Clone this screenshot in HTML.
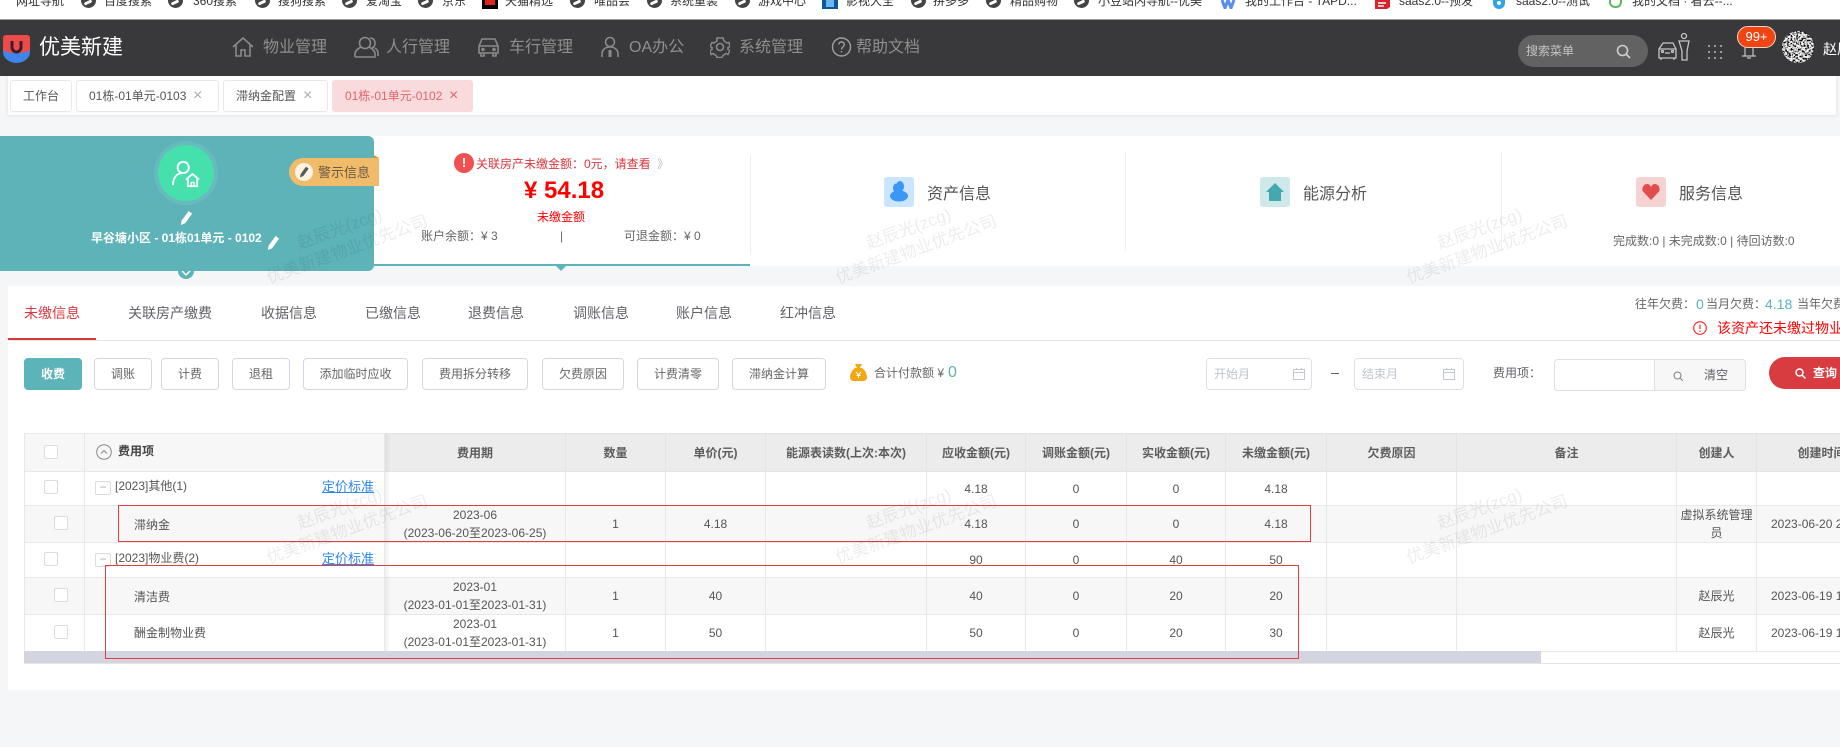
<!DOCTYPE html>
<html lang="zh">
<head>
<meta charset="utf-8">
<title>优美新建</title>
<style>
*{box-sizing:border-box;margin:0;padding:0}
html,body{width:1840px;height:747px;overflow:hidden;background:#f5f6f8}
body{position:relative;font-family:"Liberation Sans","Noto Sans CJK SC",sans-serif;font-size:12px;color:#606266}
.a{position:absolute}
.t{position:absolute;white-space:nowrap;line-height:1}
.b{position:absolute;top:358px;height:32px;border:1px solid #d6d6e0;border-radius:4px;background:#fff;color:#666;text-align:center;line-height:30px;font-size:12px}
.tab{position:absolute;top:80px;height:32px;border:1px solid #e8e8e8;border-radius:3px;background:#fff;line-height:30px;padding-left:12px;color:#555;white-space:nowrap}
.x{position:absolute;top:0;color:#aaa;font-size:16px;font-weight:normal}
.nav{position:absolute;top:40px;font-size:16px;line-height:16px;color:#8f8f8f;white-space:nowrap}
.ni{position:absolute;top:36px;fill:none;stroke:#8a8a8a;stroke-width:1.6}
.bk{position:absolute;top:-5px;line-height:12px;color:#333;white-space:nowrap}
.g{position:absolute;top:-7px;width:15px;height:15px;border-radius:50%;background:#444}
.g:after{content:"";position:absolute;left:3px;top:8px;width:8px;height:3px;background:#fff;border-radius:2px;transform:rotate(-25deg)}
.tabx{position:absolute;top:306px;font-size:14px;line-height:14px;color:#606266;white-space:nowrap}
table{border-collapse:collapse;table-layout:fixed;width:1860px}
td,th{border:1px solid #e8e8e8;text-align:center;font-size:12px;line-height:18px;color:#555;font-weight:normal;overflow:hidden}
th{background:#ececec;font-weight:bold;color:#5c5c5c;border-color:#e4e4e4}
th.s{background:#f7f7f7;border-color:#e8e8e8}
tr.z td{background:#f7f7f7}
.cb{position:absolute;width:14px;height:14px;border:1px solid #dcdcdc;border-radius:2px;background:#fff}
.ex{position:absolute;left:95px;width:16px;height:14px;border:1px solid #dcdcdc;border-radius:2px;background:#fff;color:#aaa;text-align:center;line-height:11px;font-size:12px}
.lk{position:absolute;left:322px;font-size:13px;line-height:13px;color:#2f88ea;text-decoration:underline;white-space:nowrap}
.rd{position:absolute;border:1px solid #e43d3d;pointer-events:none}
</style>
</head>
<body>

<!-- bookmarks -->
<div class="a" style="left:0;top:0;width:1840px;height:20px;background:#fff;border-bottom:1px solid #9a9a9a;overflow:hidden">
<span class="bk" style="left:16px">网址导航</span>
<span class="g" style="left:81px"></span><span class="bk" style="left:104px">百度搜索</span>
<span class="g" style="left:168px"></span><span class="bk" style="left:193px">360搜索</span>
<span class="g" style="left:255px"></span><span class="bk" style="left:278px">搜狗搜索</span>
<span class="g" style="left:342px"></span><span class="bk" style="left:366px">爱淘宝</span>
<span class="g" style="left:418px"></span><span class="bk" style="left:442px">京东</span>
<span class="a" style="left:482px;top:0;width:16px;height:9px;background:#000"></span><span class="a" style="left:485px;top:0;width:10px;height:5px;background:#e2231a"></span><span class="bk" style="left:505px">天猫精选</span>
<span class="g" style="left:570px"></span><span class="bk" style="left:594px">唯品会</span>
<span class="g" style="left:647px"></span><span class="bk" style="left:670px">系统重装</span>
<span class="g" style="left:735px"></span><span class="bk" style="left:758px">游戏中心</span>
<span class="a" style="left:822px;top:0;width:16px;height:9px;background:#0b5a96"></span><span class="a" style="left:826px;top:0;width:8px;height:7px;background:#6db6ee"></span><span class="bk" style="left:846px">影视大全</span>
<span class="g" style="left:911px"></span><span class="bk" style="left:933px">拼多多</span>
<span class="g" style="left:986px"></span><span class="bk" style="left:1010px">精品购物</span>
<span class="g" style="left:1074px"></span><span class="bk" style="left:1098px">小豆站内导航--优美</span>
<svg class="a" style="left:1221px;top:0" width="15" height="9" fill="none" stroke="#5b8def" stroke-width="3"><path d="M1 0l3 8 3-8 3 8 3-8"/></svg><span class="bk" style="left:1245px">我的工作台 - TAPD...</span>
<svg class="a" style="left:1375px;top:0" width="15" height="9"><path d="M0 0h15v7l-3 2H0z" fill="#d8232a"/><path d="M3 3h8M3 6h6" stroke="#fff" stroke-width="1.500"/></svg><span class="bk" style="left:1399px">saas2.0--预发</span>
<span class="a" style="left:1493px;top:0;width:12px;height:9px;background:#2fa4e7;border-radius:0 0 6px 6px"></span><span class="a" style="left:1497px;top:1px;width:4px;height:4px;background:#fff;border-radius:50%"></span><span class="bk" style="left:1516px">saas2.0--测试</span>
<span class="a" style="left:1609px;top:0;width:13px;height:8px;border:2px solid #5cb85c;border-top:none;border-radius:0 0 6px 6px"></span><span class="bk" style="left:1632px">我的文档 · 看云--...</span>
</div>

<!-- header -->
<div class="a" style="left:0;top:20px;width:1840px;height:56px;background:#39393b"></div>
<svg class="a" style="left:2px;top:34px" width="29" height="30" viewBox="0 0 29 30">
<path d="M1 14h27v4a13.500 11 0 0 1-27 0z" fill="#3f86ea"/>
<path d="M4 1h21a3 3 0 0 1 3 3v12c-4 2-6 3-13.500 3S5 18 1 16V4a3 3 0 0 1 3-3z" fill="#ef4a4a"/>
<path d="M10 7v6a4.500 5 0 0 0 9 0V7" fill="none" stroke="#3a2028" stroke-width="3"/>
</svg>
<span class="t" style="left:39px;top:37px;font-size:21px;line-height:21px;color:#fff">优美新建</span>

<svg class="ni" style="left:232px" width="22" height="22" viewBox="0 0 22 22"><path d="M1 11 11 2l10 9M4 9v11h5v-6h4v6h5V9"/></svg>
<span class="nav" style="left:263px">物业管理</span>
<svg class="ni" style="left:353px" width="26" height="22" viewBox="0 0 26 22"><circle cx="12" cy="7" r="5.500"/><path d="M2 21v-3c0-4 4-6 6-7m8 0c2 1 6 3 6 7v3H2M17 2c3 0 5 2 5 5s-1 4-3 5m3 0c1 1 3 2 3 5v3"/></svg>
<span class="nav" style="left:386px">人行管理</span>
<svg class="ni" style="left:477px" width="23" height="22" viewBox="0 0 23 22"><path d="M5 3h13l3 7v7H2v-7zM2 10h19M4 17v3h3v-3m9 0v3h3v-3"/><circle cx="6" cy="13.500" r="1"/><circle cx="17" cy="13.500" r="1"/></svg>
<span class="nav" style="left:509px">车行管理</span>
<svg class="ni" style="left:600px" width="20" height="22" viewBox="0 0 20 22"><circle cx="10" cy="6" r="4.500"/><path d="M2 21v-3c0-4 3-7 8-7s8 3 8 7v3"/><path d="M10 14v7" stroke-width="3"/></svg>
<span class="nav" style="left:629px">OA办公</span>
<svg class="ni" style="left:710px" width="20" height="22" viewBox="0 0 20 22"><path d="M7 2h6l1 3 3 2 2-.500 1 4-2 1v2l2 1-2 4-2-1-3 2-1 2H7l-1-2-3-2-2 1-1-4 2-1v-2l-2-1 2-4 2 .500 3-2z" stroke-width="1.500"/><circle cx="10" cy="11" r="3.500"/></svg>
<span class="nav" style="left:739px">系统管理</span>
<svg class="a" style="left:831px;top:37px" width="21" height="21" viewBox="0 0 21 21" fill="none" stroke="#a0a0a0" stroke-width="1.400"><circle cx="10.500" cy="10" r="9"/><path d="M7.800 7.500c0-3.500 5.500-3.500 5.500 0 0 2.500-2.800 2.300-2.800 5"/><path d="M10.500 14v1.500"/></svg>
<span class="nav" style="left:856px">帮助文档</span>

<div class="a" style="left:1518px;top:35px;width:130px;height:32px;border-radius:16px;background:#626263"></div>
<span class="t" style="left:1526px;top:45px;color:#c4c4c4">搜索菜单</span>
<svg class="a" style="left:1616px;top:44px" width="15" height="15" viewBox="0 0 15 15" fill="none" stroke="#cfcfcf" stroke-width="1.600"><circle cx="6.500" cy="6.500" r="5"/><path d="M10 10l4 4"/></svg>
<svg class="a" style="left:1658px;top:32px" width="32" height="29" viewBox="0 0 32 29" fill="none" stroke="#c4c4c8" stroke-width="1.300"><path d="M5 11h10l3 6v9H1v-9zM1 17h17M3 26v2m13-2v2"/><path d="M7 21h5"/><circle cx="4.500" cy="19.500" r="1"/><circle cx="14.500" cy="19.500" r="1"/><circle cx="26" cy="4" r="2.500"/><path d="M21 9h10l-2 10v9h-5v-9z"/></svg>
<svg class="a" style="left:1707px;top:44px" width="16" height="16" fill="#9c9c9c"><rect x="1" y="1" width="2" height="2"/><rect x="7" y="1" width="2" height="2"/><rect x="13" y="1" width="2" height="2"/><rect x="1" y="7" width="2" height="2"/><rect x="7" y="7" width="2" height="2"/><rect x="13" y="7" width="2" height="2"/><rect x="1" y="13" width="2" height="2"/><rect x="7" y="13" width="2" height="2"/><rect x="13" y="13" width="2" height="2"/></svg>
<svg class="a" style="left:1741px;top:44px" width="16" height="16" fill="none" stroke="#c4c4c8" stroke-width="1.200"><path d="M4 3v9H1h14h-3V3"/><path d="M6 14h4"/></svg>
<div class="a" style="left:1737px;top:26px;width:39px;height:22px;border-radius:11px;background:#f04512;border:1px solid #f7d6c9;color:#fff;font-size:13px;line-height:20px;text-align:center">99+</div>
<svg class="a" style="left:1782px;top:31px" width="32" height="32" viewBox="0 0 32 32">
<defs><filter id="nz" x="0" y="0" width="100%" height="100%"><feTurbulence type="fractalNoise" baseFrequency="0.55" numOctaves="2" seed="4"/><feColorMatrix type="matrix" values="0 0 0 0 0  2.500 2.500 2.500 0 -3.250  0 0 0 0 0  0 0 0 0 1"/><feColorMatrix type="matrix" values="0 1 0 0 0  0 1 0 0 0  0 1 0 0 0  0 0 0 0 1"/></filter><clipPath id="cp"><circle cx="16" cy="16" r="16"/></clipPath></defs>
<rect width="32" height="32" filter="url(#nz)" clip-path="url(#cp)"/>
</svg>
<span class="t" style="left:1823px;top:42px;font-size:14px;line-height:14px;color:#fff">赵辰光</span>

<!-- tabs row -->
<div class="a" style="left:7px;top:76px;width:1830px;height:39px;background:#fff;box-shadow:0 1px 3px rgba(0,0,0,.08);border-left:1px solid #eee;border-right:1px solid #eee"></div>
<div class="tab" style="left:10px;width:62px">工作台</div>
<div class="tab" style="left:76px;width:143px">01栋-01单元-0103<span class="x" style="left:116px;line-height:30px">×</span></div>
<div class="tab" style="left:223px;width:105px">滞纳金配置<span class="x" style="left:79px;line-height:30px">×</span></div>
<div class="tab" style="left:332px;width:141px;background:#f9dadd;border-color:#f9dadd;color:#e0666f">01栋-01单元-0102<span class="x" style="left:116px;line-height:30px;color:#e0666f">×</span></div>

<!-- info panel -->
<div class="a" style="left:0;top:136px;width:1840px;height:130px;background:#fff"></div>
<div class="a" style="left:374px;top:264px;width:376px;height:2px;background:#5cb3b8"></div>
<div class="a" style="left:554px;top:264px;width:0;height:0;border-left:7px solid transparent;border-right:7px solid transparent;border-top:7px solid #5cb3b8"></div>
<div class="a" style="left:750px;top:155px;width:1px;height:100px;background:#eceef0"></div>
<div class="a" style="left:1125px;top:151px;width:1px;height:100px;background:#eff0f2"></div>
<div class="a" style="left:1501px;top:151px;width:1px;height:100px;background:#eff0f2"></div>

<div class="a" style="left:178px;top:262px;width:16px;height:17px;border-radius:0 0 8px 8px;background:#5cb3b8"></div>
<svg class="a" style="left:181px;top:270px" width="10" height="7" fill="none" stroke="#fff" stroke-width="1.500"><path d="M1 1l4 4 4-4"/></svg>
<div class="a" style="left:0;top:136px;width:374px;height:135px;background:#5db3b8;border-radius:0 6px 6px 0"></div>
<div class="a" style="left:154px;top:141px;width:64px;height:64px;border-radius:50%;background:#68bbbc"></div>
<div class="a" style="left:158px;top:145px;width:56px;height:56px;border-radius:50%;background:#46e0ac"></div>
<svg class="a" style="left:172px;top:160px" width="28" height="28" viewBox="0 0 30 30" fill="none" stroke="#fff" stroke-width="2"><circle cx="12" cy="8" r="6"/><path d="M1 27c0-8 4-12 9-13"/><path d="M15 21l7-6 7 6M17 19.500V28h10v-8.500"/><path d="M20.500 28v-4h3v4" stroke-width="1.500"/></svg>
<svg class="a" style="left:179px;top:210px" width="14" height="16" viewBox="0 0 16 18" fill="#fff"><path d="M11 1l4 3-8 11-5 2 1-5z"/></svg>
<span class="t" style="left:91px;top:232px;color:#fff;font-weight:bold">早谷塘小区 - 01栋01单元 - 0102</span>
<svg class="a" style="left:266px;top:235px" width="14" height="16" viewBox="0 0 16 18" fill="#fff"><path d="M11 1l4 3-8 11-5 2 1-5z"/></svg>
<div class="a" style="left:374px;top:155px;width:0;height:0;border-bottom:3px solid #d9952f;border-right:5px solid transparent"></div>
<div class="a" style="left:289px;top:158px;width:90px;height:28px;background:#f1bc6a;border-radius:14px 0 0 14px"></div>
<div class="a" style="left:295px;top:163px;width:18px;height:18px;border-radius:50%;background:#fdf3e2"></div>
<svg class="a" style="left:298px;top:166px" width="12" height="12" viewBox="0 0 16 18" fill="#5a5a5a"><path d="M11 1l4 3-8 11-5 2 1-5z"/></svg>
<span class="t" style="left:318px;top:166px;font-size:13px;line-height:13px;color:#6a5a44">警示信息</span>

<div class="a" style="left:454px;top:153px;width:20px;height:20px;border-radius:50%;background:#f05050;color:#fff;text-align:center;line-height:20px;font-size:13px;font-weight:bold">!</div>
<span class="t" style="left:476px;top:158px;color:#d9363e">关联房产未缴金额：0元，请查看<span style="color:#bbb;margin-left:3px"> 》</span></span>
<span class="t" style="left:524px;top:179px;font-size:24px;line-height:24px;font-weight:bold;color:#f00">¥ 54.18</span>
<span class="t" style="left:537px;top:211px;color:#f00">未缴金额</span>
<span class="t" style="left:421px;top:230px;color:#666">账户余额：¥ 3</span>
<span class="t" style="left:560px;top:230px;color:#666">|</span>
<span class="t" style="left:624px;top:230px;color:#666">可退金额：¥ 0</span>

<div class="a" style="left:884px;top:177px;width:30px;height:30px;border-radius:3px;background:#cce5ff"></div>
<svg class="a" style="left:889px;top:181px" width="20" height="21" fill="#3b97f6"><ellipse cx="11" cy="5.500" rx="4" ry="5.500"/><ellipse cx="7" cy="7" rx="3" ry="4.500"/><ellipse cx="10" cy="15" rx="9" ry="5.500"/></svg>
<span class="t" style="left:927px;top:187px;font-size:16px;line-height:16px;color:#555">资产信息</span>
<div class="a" style="left:1260px;top:177px;width:30px;height:30px;border-radius:3px;background:#cfe9ea"></div>
<svg class="a" style="left:1266px;top:183px" width="18" height="18" fill="#44a8b0"><path d="M9 0l9 9h-3v9H3V9H0z"/></svg>
<span class="t" style="left:1303px;top:187px;font-size:16px;line-height:16px;color:#555">能源分析</span>
<div class="a" style="left:1636px;top:177px;width:30px;height:30px;border-radius:3px;background:#f6d3d3"></div>
<svg class="a" style="left:1642px;top:184px" width="18" height="16" fill="#e14d4d"><path d="M9 16L1 7.500C-1 4 2 0 5 0c2 0 3 1 4 3 1-2 2-3 4-3 3 0 6 4 4 7.500z"/></svg>
<span class="t" style="left:1679px;top:187px;font-size:16px;line-height:16px;color:#555">服务信息</span>
<span class="t" style="left:1613px;top:235px;color:#666">完成数:0 | 未完成数:0 | 待回访数:0</span>

<!-- main section -->
<div class="a" style="left:8px;top:286px;width:1832px;height:404px;background:#fff"></div>
<span class="tabx" style="left:24px;color:#d9383d">未缴信息</span>
<span class="tabx" style="left:128px">关联房产缴费</span>
<span class="tabx" style="left:261px">收据信息</span>
<span class="tabx" style="left:365px">已缴信息</span>
<span class="tabx" style="left:468px">退费信息</span>
<span class="tabx" style="left:573px">调账信息</span>
<span class="tabx" style="left:676px">账户信息</span>
<span class="tabx" style="left:780px">红冲信息</span>
<div class="a" style="left:8px;top:340px;width:1832px;height:1px;background:#e4e4e4"></div>
<div class="a" style="left:8px;top:338px;width:88px;height:2px;background:#d9383d"></div>

<span class="t" style="left:1635px;top:298px;color:#666">往年欠费：</span>
<span class="t" style="left:1696px;top:297px;font-size:14px;line-height:14px;color:#5cb3b8">0</span>
<span class="t" style="left:1706px;top:298px;color:#666">当月欠费：</span>
<span class="t" style="left:1765px;top:297px;font-size:14px;line-height:14px;color:#5cb3b8">4.18</span>
<span class="t" style="left:1797px;top:298px;color:#666">当年欠费</span>
<svg class="a" style="left:1693px;top:321px" width="14" height="14" fill="none" stroke="#f00"><circle cx="7" cy="7" r="6.300"/><path d="M7 3.500v4.500M7 9.500v1.500"/></svg>
<span class="t" style="left:1717px;top:321px;font-size:14px;line-height:14px;color:#f00">该资产还未缴过物业费</span>

<div class="b" style="left:24px;width:58px;background:#5cb3b8;border-color:#5cb3b8;color:#fff;font-weight:bold">收费</div>
<div class="b" style="left:94px;width:58px">调账</div>
<div class="b" style="left:161px;width:58px">计费</div>
<div class="b" style="left:232px;width:58px">退租</div>
<div class="b" style="left:303px;width:105px">添加临时应收</div>
<div class="b" style="left:422px;width:106px">费用拆分转移</div>
<div class="b" style="left:542px;width:82px">欠费原因</div>
<div class="b" style="left:637px;width:82px">计费清零</div>
<div class="b" style="left:732px;width:94px">滞纳金计算</div>
<svg class="a" style="left:850px;top:364px" width="17" height="17" fill="#f3a712"><path d="M5 0h7l-2 4h2c3 2 5 6 5 9 0 3-2 4-4 4H4c-2 0-4-1-4-4 0-3 2-7 5-9h2z"/><path d="M6 8l2.500 3L11 8M8.500 11v3M6.500 11.500h4" fill="none" stroke="#fff"/></svg>
<span class="t" style="left:874px;top:367px;color:#666">合计付款额 ¥</span>
<span class="t" style="left:948px;top:365px;font-size:16px;line-height:16px;color:#5cb3b8">0</span>

<div class="a" style="left:1206px;top:358px;width:106px;height:32px;border:1px solid #e0e0e4;border-radius:4px"></div>
<span class="t" style="left:1214px;top:368px;color:#c0c4cc">开始月</span>
<svg class="a" style="left:1292px;top:367px" width="14" height="14" fill="none" stroke="#c4c7cf"><rect x="1.500" y="2.500" width="11" height="10"/><path d="M1.500 5.500h11M4.500 1v2M9.500 1v2"/></svg>
<div class="a" style="left:1331px;top:373px;width:8px;height:1px;background:#606266"></div>
<div class="a" style="left:1354px;top:358px;width:110px;height:32px;border:1px solid #e0e0e4;border-radius:4px"></div>
<span class="t" style="left:1362px;top:368px;color:#c0c4cc">结束月</span>
<svg class="a" style="left:1442px;top:367px" width="14" height="14" fill="none" stroke="#c4c7cf"><rect x="1.500" y="2.500" width="11" height="10"/><path d="M1.500 5.500h11M4.500 1v2M9.500 1v2"/></svg>
<span class="t" style="left:1493px;top:367px;color:#606266">费用项：</span>
<div class="a" style="left:1554px;top:359px;width:192px;height:32px;border:1px solid #e0e0e4;border-radius:4px;overflow:hidden"><div class="a" style="left:99px;top:0;width:92px;height:30px;background:#f7f7f7;border-left:1px solid #e0e0e4"></div></div>
<svg class="a" style="left:1673px;top:371px" width="10" height="10" fill="none" stroke="#888" stroke-width="1.100"><circle cx="4.500" cy="4.500" r="3.500"/><path d="M7 7l3 3"/></svg>
<span class="t" style="left:1704px;top:369px;color:#606266">清空</span>
<div class="a" style="left:1769px;top:357px;width:71px;height:32px;background:#d83c40;border-radius:16px 0 0 16px"></div>
<svg class="a" style="left:1795px;top:368px" width="11" height="11" fill="none" stroke="#fff" stroke-width="1.500"><circle cx="4.500" cy="4.500" r="3.500"/><path d="M7 7l3.500 3.500"/></svg>
<span class="t" style="left:1813px;top:367px;color:#fff;font-weight:bold">查询</span>

<!-- table -->
<div class="a" style="left:24px;top:433px;width:1816px;height:231px;overflow:hidden;background:#fff;border-bottom:1px solid #e4e4e4">
<table>
<colgroup><col style="width:60px"><col style="width:300px"><col style="width:181px"><col style="width:100px"><col style="width:100px"><col style="width:161px"><col style="width:99px"><col style="width:101px"><col style="width:99px"><col style="width:101px"><col style="width:130px"><col style="width:220px"><col style="width:80px"><col style="width:130px"></colgroup>
<tr style="height:38px"><th class="s"></th><th class="s"></th><th>费用期</th><th>数量</th><th>单价(元)</th><th>能源表读数(上次:本次)</th><th>应收金额(元)</th><th>调账金额(元)</th><th>实收金额(元)</th><th>未缴金额(元)</th><th>欠费原因</th><th>备注</th><th>创建人</th><th>创建时间</th></tr>
<tr style="height:34px"><td></td><td></td><td></td><td></td><td></td><td></td><td>4.18</td><td>0</td><td>0</td><td>4.18</td><td></td><td></td><td></td><td></td></tr>
<tr class="z" style="height:37px"><td></td><td></td><td>2023-06<br>(2023-06-20至2023-06-25)</td><td>1</td><td>4.18</td><td></td><td>4.18</td><td>0</td><td>0</td><td>4.18</td><td></td><td></td><td>虚拟系统管理<br>员</td><td style="text-align:left;padding-left:14px;white-space:nowrap">2023-06-20 2</td></tr>
<tr style="height:35px"><td></td><td></td><td></td><td></td><td></td><td></td><td>90</td><td>0</td><td>40</td><td>50</td><td></td><td></td><td></td><td></td></tr>
<tr class="z" style="height:37px"><td></td><td></td><td>2023-01<br>(2023-01-01至2023-01-31)</td><td>1</td><td>40</td><td></td><td>40</td><td>0</td><td>20</td><td>20</td><td></td><td></td><td>赵辰光</td><td style="text-align:left;padding-left:14px;white-space:nowrap">2023-06-19 1</td></tr>
<tr style="height:37px"><td></td><td></td><td>2023-01<br>(2023-01-01至2023-01-31)</td><td>1</td><td>50</td><td></td><td>50</td><td>0</td><td>20</td><td>30</td><td></td><td></td><td>赵辰光</td><td style="text-align:left;padding-left:14px;white-space:nowrap">2023-06-19 1</td></tr>
</table>
<div class="a" style="left:0;top:218px;width:1517px;height:12px;background:#d4d4e0"></div>
</div>
<div class="a" style="left:385px;top:434px;width:6px;height:217px;background:linear-gradient(to right,rgba(0,0,0,.06),rgba(0,0,0,0))"></div>

<div class="cb" style="left:44px;top:445px"></div>
<svg class="a" style="left:96px;top:444px" width="16" height="16" fill="none" stroke="#888"><circle cx="8" cy="8" r="7.300"/><path d="M5 9.500l3-3 3 3"/></svg>
<span class="t" style="left:118px;top:445px;font-weight:bold;color:#444">费用项</span>
<div class="cb" style="left:44px;top:480px"></div>
<div class="ex" style="top:481px">−</div>
<span class="t" style="left:115px;top:480px;color:#555">[2023]其他(1)</span>
<span class="lk" style="top:480px">定价标准</span>
<div class="cb" style="left:54px;top:516px"></div>
<span class="t" style="left:134px;top:519px;color:#555">滞纳金</span>
<div class="cb" style="left:44px;top:552px"></div>
<div class="ex" style="top:553px">−</div>
<span class="t" style="left:115px;top:552px;color:#555">[2023]物业费(2)</span>
<span class="lk" style="top:552px">定价标准</span>
<div class="cb" style="left:54px;top:588px"></div>
<span class="t" style="left:134px;top:591px;color:#555">清洁费</span>
<div class="cb" style="left:54px;top:625px"></div>
<span class="t" style="left:134px;top:627px;color:#555">酬金制物业费</span>

<div class="rd" style="left:118px;top:505px;width:1193px;height:37px"></div>
<div class="rd" style="left:105px;top:565px;width:1194px;height:94px"></div>

<!-- watermarks -->
<svg class="a" style="left:0;top:0;pointer-events:none" width="1840" height="747" font-family="Liberation Sans, Noto Sans CJK SC, sans-serif" font-size="17" fill="rgba(0,0,0,.075)" text-anchor="middle">
<g transform="translate(347,249) rotate(-20)"><text x="0" y="-16">赵辰光(zcg)</text><text x="0" y="6">优美新建物业优先公司</text></g>
<g transform="translate(916,249) rotate(-20)"><text x="0" y="-16">赵辰光(zcg)</text><text x="0" y="6">优美新建物业优先公司</text></g>
<g transform="translate(1487,249) rotate(-20)"><text x="0" y="-16">赵辰光(zcg)</text><text x="0" y="6">优美新建物业优先公司</text></g>
<g transform="translate(347,529) rotate(-20)"><text x="0" y="-16">赵辰光(zcg)</text><text x="0" y="6">优美新建物业优先公司</text></g>
<g transform="translate(916,529) rotate(-20)"><text x="0" y="-16">赵辰光(zcg)</text><text x="0" y="6">优美新建物业优先公司</text></g>
<g transform="translate(1487,529) rotate(-20)"><text x="0" y="-16">赵辰光(zcg)</text><text x="0" y="6">优美新建物业优先公司</text></g>
</svg>
</body>
</html>
